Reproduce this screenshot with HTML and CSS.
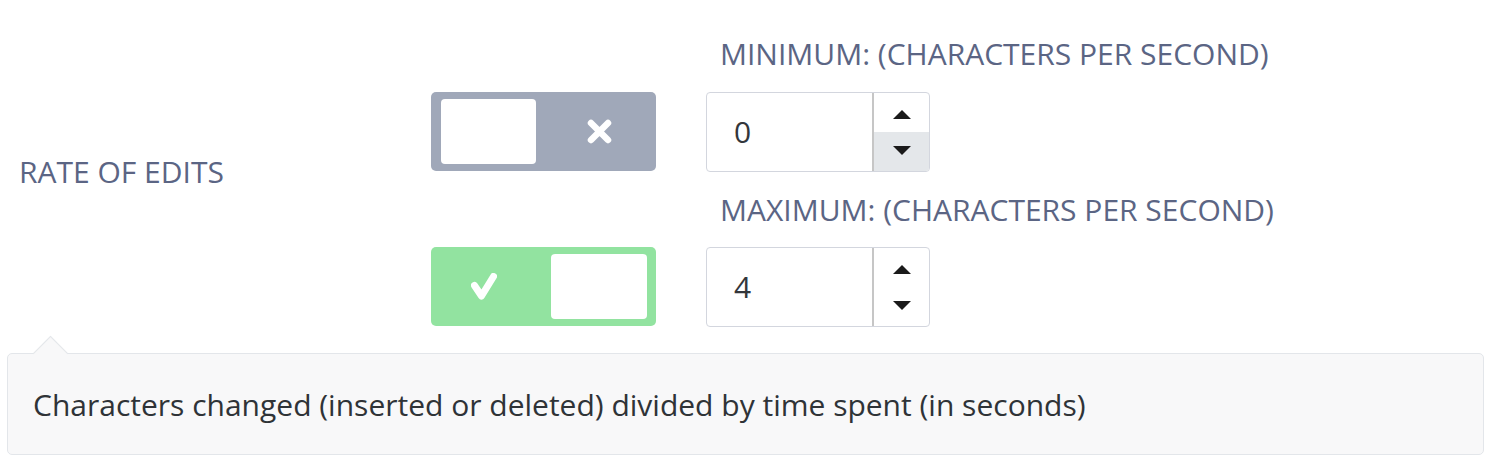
FILE: index.html
```html
<!DOCTYPE html>
<html>
<head>
<meta charset="utf-8">
<link rel="stylesheet" href="styles.css">
</head>
<body>
<div class="field">
  <div class="field-label">RATE OF EDITS</div>
  <div class="controls">
    <div class="sub-label">MINIMUM: (CHARACTERS PER SECOND)</div>
    <div class="control-row">
      <div class="toggle toggle-off">
        <div class="knob"></div>
        <svg class="icon-x" width="25" height="25" viewBox="0 0 25 25"><path d="M4 4 L21 21 M21 4 L4 21" stroke="#fff" stroke-width="6.5" stroke-linecap="round" fill="none"/></svg>
      </div>
      <div class="number">
        <div class="number-value">0</div>
        <div class="spinner">
          <div class="spin-btn"><span class="tri-up"></span></div>
          <div class="spin-btn spin-hover"><span class="tri-down"></span></div>
        </div>
      </div>
    </div>
    <div class="sub-label second">MAXIMUM: (CHARACTERS PER SECOND)</div>
    <div class="control-row">
      <div class="toggle toggle-on">
        <svg class="icon-check" width="26" height="27" viewBox="0 0 26 27"><path d="M3.5 12.5 L10.5 23 L22.5 3.5" stroke="#fff" stroke-width="7" stroke-linecap="round" stroke-linejoin="round" fill="none"/></svg>
        <div class="knob"></div>
      </div>
      <div class="number">
        <div class="number-value">4</div>
        <div class="spinner">
          <div class="spin-btn"><span class="tri-up"></span></div>
          <div class="spin-btn"><span class="tri-down"></span></div>
        </div>
      </div>
    </div>
  </div>
</div>
<div class="tooltip">
  <div class="tooltip-text">Characters changed (inserted or deleted) divided by time spent (in seconds)</div>
</div>
</body>
</html>
```

FILE: styles.css
```css
html, body {
  margin: 0;
  padding: 0;
  background: #ffffff;
}
body {
  font-family: "Open Sans", "Noto Sans", sans-serif;
  width: 1500px;
}
.field {
  display: flex;
  align-items: center;
  padding-top: 36px;
}
.field-label {
  width: 412px;
  padding-left: 19px;
  font-size: 30px;
  line-height: 36px;
  color: #5b6584;
  margin-bottom: 20px;
}
.controls {
  display: flex;
  flex-direction: column;
}
.sub-label {
  margin-left: 289px;
  font-size: 30px;
  line-height: 36px;
  color: #5b6584;
  margin-bottom: 20px;
}
.sub-label.second {
  margin-top: 20px;
  margin-bottom: 19px;
}
.control-row {
  display: flex;
  align-items: flex-start;
  gap: 50px;
}
.toggle {
  width: 225px;
  height: 79px;
  border-radius: 5px;
  display: flex;
  align-items: center;
  box-sizing: border-box;
}
.toggle-off {
  background: #a0a8b9;
  padding-left: 10px;
}
.toggle-on {
  background: #92e3a0;
  padding-left: 40px;
}
.knob {
  width: 95px;
  height: 65px;
  background: #ffffff;
  border-radius: 4px;
}
.toggle-on .knob {
  width: 96px;
  margin-left: auto;
  margin-right: 9px;
}
.icon-x {
  margin-left: 51px;
  display: block;
}
.icon-check {
  display: block;
}
.number {
  width: 224px;
  height: 80px;
  box-sizing: border-box;
  border: 1px solid #d3d6de;
  border-radius: 4px;
  display: flex;
  overflow: hidden;
}
.number-value {
  flex: 1;
  padding-left: 27px;
  font-size: 30px;
  line-height: 78px;
  color: #33363b;
}
.spinner {
  width: 55px;
  border-left: 2px solid #c6c6c6;
  display: flex;
  flex-direction: column;
}
.spin-btn {
  flex: 1;
  display: flex;
  align-items: center;
  justify-content: center;
}
.spin-hover {
  background: #e4e7ea;
}
.tri-up {
  width: 0;
  height: 0;
  border-left: 9px solid transparent;
  border-right: 9px solid transparent;
  border-bottom: 9px solid #1a1a1a;
  margin-top: 4px;
}
.tri-down {
  width: 0;
  height: 0;
  border-left: 9px solid transparent;
  border-right: 9px solid transparent;
  border-top: 9px solid #1a1a1a;
  margin-bottom: 2px;
}
.tooltip {
  position: relative;
  margin: 26px 16px 0 7px;
  height: 102px;
  box-sizing: border-box;
  border: 1px solid #e3e6ea;
  border-radius: 5px;
  background: #f8f8f9;
  display: flex;
  align-items: center;
  padding-left: 25px;
}
.tooltip::before {
  content: "";
  position: absolute;
  left: 30px;
  top: -13px;
  width: 24px;
  height: 24px;
  background: #f8f8f9;
  border-left: 1px solid #e3e6ea;
  border-top: 1px solid #e3e6ea;
  transform: rotate(45deg);
}
.tooltip-text {
  position: relative;
  font-size: 30px;
  color: #2f3337;
}
```
